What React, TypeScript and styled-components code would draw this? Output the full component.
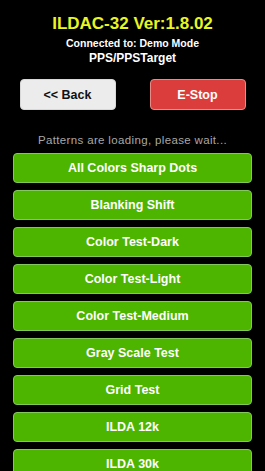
import React from 'react';
import styled, { createGlobalStyle } from 'styled-components';

const GlobalStyle = createGlobalStyle`
  html, body {
    margin: 0;
    padding: 0;
    background: #000;
    overflow: hidden;
  }
  body {
    font-family: "Liberation Sans", Arial, sans-serif;
  }
`;

const Screen = styled.div`
  width: 265px;
  height: 471px;
  background: #000;
  display: flex;
  flex-direction: column;
  align-items: center;
  overflow: hidden;
`;

const Header = styled.div`
  display: flex;
  flex-direction: column;
  align-items: center;
`;

const Title = styled.h1`
  margin: 14px 0 0;
  font-size: 17px;
  line-height: 20px;
  font-weight: bold;
  color: #eaf524;
`;

const Status = styled.div<{ $size: number; $gap?: number }>`
  margin-top: ${p => p.$gap ?? 0}px;
  font-size: ${p => p.$size}px;
  line-height: ${p => (p.$size > 11 ? 16 : 14)}px;
  font-weight: bold;
  color: #fff;
`;

const ControlRow = styled.div`
  display: flex;
  gap: 34px;
  margin-top: 13px;
`;

const ControlButton = styled.button<{ $danger?: boolean }>`
  width: 96px;
  height: 31px;
  border-radius: 4px;
  border: 1px solid ${p => (p.$danger ? '#e98a85' : '#d8d8d8')};
  background: ${p => (p.$danger ? '#da3d3b' : '#ececec')};
  color: ${p => (p.$danger ? '#fff' : '#111')};
  font-family: "Liberation Sans", Arial, sans-serif;
  font-size: 12.5px;
  font-weight: bold;
  padding: 0;
`;

const Notice = styled.div`
  margin-top: 23px;
  font-size: 11.5px;
  line-height: 14px;
  color: #a8a8a8;
  letter-spacing: 0.35px;
`;

const PatternList = styled.div`
  display: flex;
  flex-direction: column;
  gap: 7px;
  margin-top: 6px;
  width: 239px;
`;

const PatternButton = styled.button`
  height: 30px;
  border-radius: 4px;
  border: 1px solid #83c95a;
  background: #4db400;
  color: #fff;
  font-family: "Liberation Sans", Arial, sans-serif;
  font-size: 12.5px;
  font-weight: bold;
  padding: 0;
  flex-shrink: 0;
`;

const patterns = [
  'All Colors Sharp Dots',
  'Blanking Shift',
  'Color Test-Dark',
  'Color Test-Light',
  'Color Test-Medium',
  'Gray Scale Test',
  'Grid Test',
  'ILDA 12k',
  'ILDA 30k',
];

export default function App() {
  return (
    <>
      <GlobalStyle />
      <Screen>
        <Header>
          <Title>ILDAC-32 Ver:1.8.02</Title>
          <Status $size={10.5} $gap={2}>Connected to: Demo Mode</Status>
          <Status $size={12}>PPS/PPSTarget</Status>
        </Header>
        <ControlRow>
          <ControlButton>&lt;&lt; Back</ControlButton>
          <ControlButton $danger>E-Stop</ControlButton>
        </ControlRow>
        <Notice>Patterns are loading, please wait...</Notice>
        <PatternList>
          {patterns.map(name => (
            <PatternButton key={name}>{name}</PatternButton>
          ))}
        </PatternList>
      </Screen>
    </>
  );
}
